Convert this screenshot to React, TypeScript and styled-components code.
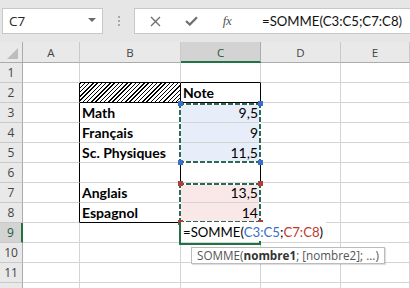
import styled, { createGlobalStyle } from "styled-components";

const GlobalStyle = createGlobalStyle`
  html, body {
    margin: 0;
    padding: 0;
    background: #ffffff;
  }
  body {
    font-family: "Open Sans", "Liberation Sans", sans-serif;
  }
`;

type CellData = { text: string; bold?: boolean; right?: boolean };

const COLS = ["A", "B", "C", "D", "E"];
const ROW_COUNT = 12;
const ACTIVE_COL = "C";
const ACTIVE_ROW = 9;

const cells: Record<string, CellData> = {
  C2: { text: "Note", bold: true },
  B3: { text: "Math", bold: true },
  B4: { text: "Français", bold: true },
  B5: { text: "Sc. Physiques", bold: true },
  B7: { text: "Anglais", bold: true },
  B8: { text: "Espagnol", bold: true },
  C3: { text: "9,5", right: true },
  C4: { text: "9", right: true },
  C5: { text: "11,5", right: true },
  C7: { text: "13,5", right: true },
  C8: { text: "14", right: true },
};

// borders of the little table B2:C8
const darkRight = (col: string, row: number) =>
  row >= 2 && row <= 8 && ["A", "B", "C"].includes(col);
const darkBottom = (col: string, row: number) =>
  (col === "B" || col === "C") && [1, 2, 8].includes(row);

const fillFor = (col: string, row: number) => {
  if (col !== "C") return undefined;
  if (row >= 3 && row <= 5) return "#e8eef9";
  if (row >= 7 && row <= 8) return "#fae8e8";
  return undefined;
};

export default function App() {
  return (
    <Window>
      <GlobalStyle />
      <Toolbar>
        <NameBox>
          <span>C7</span>
          <Caret />
        </NameBox>
        <Grip />
        <FormulaBox>
          <BarButton>
            <svg width="11" height="11" viewBox="0 0 11 11">
              <path d="M1 1 L10 10 M10 1 L1 10" stroke="#6f6f6f" strokeWidth="1.4" fill="none" />
            </svg>
          </BarButton>
          <BarButton>
            <svg width="13" height="10" viewBox="0 0 13 10">
              <path d="M1 5 L4.8 8.6 L12 1.2" stroke="#6f6f6f" strokeWidth="2.2" fill="none" />
            </svg>
          </BarButton>
          <BarButton>
            <Fx>fx</Fx>
          </BarButton>
          <FormulaText>=SOMME(C3:C5;C7:C8)</FormulaText>
        </FormulaBox>
      </Toolbar>

      <Sheet>
        <Corner>
          <CornerMark />
        </Corner>
        {COLS.map((c, i) => (
          <ColHeader key={c} $col={i + 2} $active={c === ACTIVE_COL}>
            {c}
          </ColHeader>
        ))}

        {Array.from({ length: ROW_COUNT }, (_, i) => i + 1).map((r) => (
          <RowGroup key={r} row={r} />
        ))}

        <RangeMark $row="4 / 7" $corner="#3a6fc7">
          <Handle $pos="tl" />
          <Handle $pos="tr" />
          <Handle $pos="bl" />
          <Handle $pos="br" />
        </RangeMark>
        <RangeMark $row="8 / 10" $corner="#b23b3b">
          <Handle $pos="tl" />
          <Handle $pos="tr" />
          <Handle $pos="bl" />
          <Handle $pos="br" />
        </RangeMark>

        <EditCell>
          <EditText>
            =SOMME(<Ref $color="#3a6fc7">C3:C5</Ref>;<Ref $color="#c0392f">C7:C8</Ref>)
          </EditText>
          <Tip>
            SOMME(<b>nombre1</b>; [nombre2]; ...)
          </Tip>
        </EditCell>
      </Sheet>
    </Window>
  );
}

function RowGroup({ row }: { row: number }) {
  return (
    <>
      <RowHeader $row={row + 1} $active={row === ACTIVE_ROW}>
        {row < ROW_COUNT ? row : null}
      </RowHeader>
      {COLS.map((c, i) => {
        const id = `${c}${row}`;
        const data = cells[id];
        return (
          <Cell
            key={id}
            $row={row + 1}
            $col={i + 2}
            $rightDark={darkRight(c, row)}
            $bottomDark={darkBottom(c, row)}
            $fill={fillFor(c, row)}
            $hatch={id === "B2"}
            $right={data?.right}
            $bold={data?.bold}
          >
            {data?.text}
          </Cell>
        );
      })}
    </>
  );
}

const Window = styled.div`
  width: 410px;
  height: 288px;
  overflow: hidden;
  background: #ffffff;
`;

const Toolbar = styled.div`
  height: 42px;
  background: #e6e6e6;
  display: flex;
  align-items: flex-start;
  padding-top: 8px;
  box-sizing: border-box;
`;

const NameBox = styled.div`
  margin-left: 2px;
  width: 101px;
  height: 26px;
  box-sizing: border-box;
  background: #ffffff;
  border: 1px solid #c8c8c8;
  display: flex;
  align-items: center;
  justify-content: space-between;
  padding: 0 6px 0 6px;
  font-size: 13.5px;
  color: #262626;
`;

const Caret = styled.div`
  width: 0;
  height: 0;
  border-left: 4px solid transparent;
  border-right: 4px solid transparent;
  border-top: 4px solid #6a6a6a;
  margin-top: -2px;
`;

const Grip = styled.div`
  width: 2px;
  height: 10px;
  margin: 8px 14px 0 15px;
  background: repeating-linear-gradient(180deg, #a8a8a8 0 2px, transparent 2px 4px);
`;

const FormulaBox = styled.div`
  flex: 1;
  height: 26px;
  box-sizing: border-box;
  background: #ffffff;
  border: 1px solid #c8c8c8;
  border-right: none;
  display: flex;
  align-items: center;
  padding-left: 2px;
`;

const BarButton = styled.div`
  width: 36px;
  height: 24px;
  display: flex;
  align-items: center;
  justify-content: center;
`;

const Fx = styled.span`
  font-family: "Liberation Serif", serif;
  font-style: italic;
  font-size: 13px;
  color: #555555;
  letter-spacing: -0.5px;
`;

const FormulaText = styled.div`
  margin-left: 17px;
  font-family: "Lato", "Liberation Sans", sans-serif;
  font-size: 13.2px;
  color: #111111;
  white-space: nowrap;
`;

const Sheet = styled.div`
  display: grid;
  grid-template-columns: 23px 57px 101px 80px 80px 1fr;
  grid-template-rows: 21px repeat(12, 20px);
`;

const HeaderBase = styled.div`
  box-sizing: border-box;
  background: #e9e9e9;
  display: flex;
  align-items: center;
  justify-content: center;
  font-size: 11.5px;
  color: #444444;
`;

const Corner = styled(HeaderBase)`
  grid-row: 1;
  grid-column: 1;
  border-right: 1px solid #ababab;
  border-bottom: 1px solid #ababab;
  align-items: flex-end;
  justify-content: flex-end;
  padding: 0 4px 3px 0;
`;

const CornerMark = styled.div`
  width: 11px;
  height: 11px;
  background: #bdbdbd;
  clip-path: polygon(100% 0, 100% 100%, 0 100%);
`;

const ColHeader = styled(HeaderBase)<{ $col: number; $active?: boolean }>`
  grid-row: 1;
  grid-column: ${(p) => p.$col};
  border-right: 1px solid ${(p) => (p.$active ? "#ababab" : "#c9c9c9")};
  border-bottom: ${(p) => (p.$active ? "2px solid #217346" : "1px solid #ababab")};
  background: ${(p) => (p.$active ? "#d3d3d3" : "#e9e9e9")};
  color: ${(p) => (p.$active ? "#1d5c3c" : "#444444")};
  padding-top: 1px;
`;

const RowHeader = styled(HeaderBase)<{ $row: number; $active?: boolean }>`
  grid-row: ${(p) => p.$row};
  grid-column: 1;
  border-right: ${(p) => (p.$active ? "2px solid #217346" : "1px solid #ababab")};
  border-bottom: 1px solid #c9c9c9;
  background: ${(p) => (p.$active ? "#d3d3d3" : "#e9e9e9")};
  color: ${(p) => (p.$active ? "#1d5c3c" : "#444444")};
  font-size: 12px;
`;

const Cell = styled.div<{
  $row: number;
  $col: number;
  $rightDark?: boolean;
  $bottomDark?: boolean;
  $fill?: string;
  $hatch?: boolean;
  $right?: boolean;
  $bold?: boolean;
}>`
  grid-row: ${(p) => p.$row};
  grid-column: ${(p) => p.$col};
  box-sizing: border-box;
  border-right: 1px solid ${(p) => (p.$rightDark ? "#000000" : "#d4d4d4")};
  border-bottom: 1px solid ${(p) => (p.$bottomDark ? "#000000" : "#d4d4d4")};
  background: ${(p) =>
    p.$hatch
      ? "repeating-linear-gradient(135deg, #000 0 1px, #fff 1px 3px)"
      : p.$fill ?? "#ffffff"};
  font-family: "Lato", "Liberation Sans", sans-serif;
  font-size: 14px;
  line-height: 19px;
  font-weight: ${(p) => (p.$bold ? 700 : 400)};
  color: #000000;
  text-align: ${(p) => (p.$right ? "right" : "left")};
  padding: 0 2px 0 2px;
  white-space: nowrap;
  overflow: visible;
`;

const dash = (dir: string, c: string) =>
  `repeating-linear-gradient(${dir}, ${c} 0 5px, #ffffff 5px 7px)`;

const RangeMark = styled.div<{ $row: string; $corner: string }>`
  grid-column: 4;
  grid-row: ${(p) => p.$row};
  margin-left: -2px;
  position: relative;
  pointer-events: none;
  background:
    ${dash("90deg", "#2a6a56")} left top / 100% 2px no-repeat,
    ${dash("90deg", "#2a6a56")} left bottom / 100% 2px no-repeat,
    ${dash("180deg", "#2a6a56")} left top / 2px 100% no-repeat,
    ${dash("180deg", "#2a6a56")} right top / 2px 100% no-repeat;
  --corner: ${(p) => p.$corner};
`;

const Handle = styled.div<{ $pos: "tl" | "tr" | "bl" | "br" }>`
  position: absolute;
  width: 5px;
  height: 5px;
  background: var(--corner);
  ${(p) => (p.$pos[0] === "t" ? "top: -2px;" : "bottom: -2px;")}
  ${(p) => (p.$pos[1] === "l" ? "left: -1px;" : "right: -2px;")}
`;

const EditCell = styled.div`
  grid-column: 4;
  grid-row: 10;
  margin: -1px 0 -2px -2px;
  border: 2px solid #217346;
  border-top: none;
  position: relative;
  z-index: 2;
`;

const EditText = styled.div`
  position: absolute;
  left: 0;
  top: 0;
  height: 19px;
  padding: 0 3px 0 2px;
  background: #ffffff;
  font-family: "Lato", "Liberation Sans", sans-serif;
  font-size: 13.2px;
  line-height: 20px;
  color: #000000;
  white-space: nowrap;
`;

const Ref = styled.span<{ $color: string }>`
  color: ${(p) => p.$color};
`;

const Tip = styled.div`
  position: absolute;
  left: 10px;
  top: 25px;
  height: 17px;
  box-sizing: border-box;
  padding: 0 5px;
  background: #ffffff;
  border: 1px solid #bcbcbc;
  box-shadow: 1px 1px 1px rgba(0, 0, 0, 0.12);
  font-size: 11.7px;
  line-height: 15px;
  color: #555555;
  white-space: nowrap;

  b {
    color: #333333;
  }
`;
